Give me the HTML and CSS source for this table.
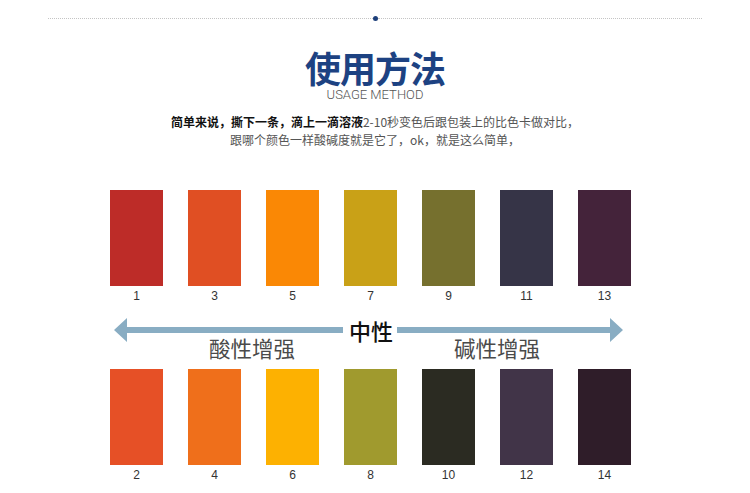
FILE: index.html
```html
<!DOCTYPE html>
<html lang="zh">
<head>
<meta charset="utf-8">
<title>使用方法</title>
<link rel="stylesheet" href="styles.css">
</head>
<body>
<div class="page">
  <div class="topline">
    <span class="seg"></span><span class="dot"></span><span class="seg"></span>
  </div>
  <h1 class="title">使用方法</h1>
  <div class="subtitle">USAGE METHOD</div>
  <p class="desc"><b>简单来说，撕下一条，滴上一滴溶液</b>2-10秒变色后跟包装上的比色卡做对比，<br>跟哪个颜色一样酸碱度就是它了，ok，就是这么简单，</p>

  <div class="chart">
    <div class="row">
      <div class="cell"><div class="sw c1"></div><span class="num">1</span></div>
      <div class="cell"><div class="sw c3"></div><span class="num">3</span></div>
      <div class="cell"><div class="sw c5"></div><span class="num">5</span></div>
      <div class="cell"><div class="sw c7"></div><span class="num">7</span></div>
      <div class="cell"><div class="sw c9"></div><span class="num">9</span></div>
      <div class="cell"><div class="sw c11"></div><span class="num">11</span></div>
      <div class="cell"><div class="sw c13"></div><span class="num">13</span></div>
    </div>

    <div class="scale">
      <svg class="arrow-l" width="229" height="24" viewBox="0 0 229 24"><polygon points="0,12 13,0 13,9 229,9 229,15 13,15 13,24" /></svg>
      <span class="neutral">中性</span>
      <svg class="arrow-r" width="226" height="24" viewBox="0 0 226 24"><polygon points="226,12 213,0 213,9 0,9 0,15 213,15 213,24" /></svg>
    </div>
    <div class="labels">
      <span class="lab">酸性增强</span>
      <span class="lab">碱性增强</span>
    </div>

    <div class="row row-b">
      <div class="cell"><div class="sw c2"></div><span class="num">2</span></div>
      <div class="cell"><div class="sw c4"></div><span class="num">4</span></div>
      <div class="cell"><div class="sw c6"></div><span class="num">6</span></div>
      <div class="cell"><div class="sw c8"></div><span class="num">8</span></div>
      <div class="cell"><div class="sw c10"></div><span class="num">10</span></div>
      <div class="cell"><div class="sw c12"></div><span class="num">12</span></div>
      <div class="cell"><div class="sw c14"></div><span class="num">14</span></div>
    </div>
  </div>
</div>
</body>
</html>
```

FILE: styles.css
```css
html, body {
  margin: 0;
  padding: 0;
  background: #ffffff;
}
body {
  font-family: "Noto Sans CJK SC", "Liberation Sans", sans-serif;
  color: #333;
}
.page {
  width: 750px;
  height: 493px;
  overflow: hidden;
}
.topline {
  width: 654px;
  margin: 16px auto 0;
  display: flex;
  align-items: center;
  height: 5px;
}
.seg {
  flex: 1;
  height: 0;
  border-top: 1px dotted #c4c4c4;
}
.dot {
  width: 5px;
  height: 5px;
  border-radius: 50%;
  background: #1d3f7a;
}
.title {
  margin: 27px 0 0;
  text-align: center;
  font-size: 36px;
  line-height: 38px;
  font-weight: 700;
  color: #1d4282;
  letter-spacing: -1px;
}
.subtitle {
  margin-top: 2px;
  text-align: center;
  font-family: Roboto, "Liberation Sans", sans-serif;
  font-weight: 300;
  font-size: 13px;
  line-height: 14px;
  color: #555;
}
.desc {
  margin: 11px 0 0;
  text-align: center;
  font-size: 12px;
  line-height: 18px;
  color: #555;
}
.desc b {
  color: #111;
  font-weight: 700;
}
.chart {
  margin: 41px 0 0 110px;
  width: 521px;
}
.row {
  display: grid;
  grid-template-columns: repeat(7, 53px);
  column-gap: 25px;
}
.cell {
  display: flex;
  flex-direction: column;
  align-items: center;
}
.sw {
  width: 53px;
  height: 96px;
}
.num {
  font-family: "Liberation Sans", Arial, sans-serif;
  font-size: 12px;
  line-height: 20px;
  color: #333;
}
.c1 { background: #bd2c28; }
.c3 { background: #e04f23; }
.c5 { background: #fa8805; }
.c7 { background: #c9a117; }
.c9 { background: #76702e; }
.c11 { background: #363447; }
.c13 { background: #44233a; }
.c2 { background: #e65026; }
.c4 { background: #ef6f1b; }
.c6 { background: #fdb101; }
.c8 { background: #a09a2e; }
.c10 { background: #2b2b22; }
.c12 { background: #413448; }
.c14 { background: #2f1d29; }

.scale {
  margin: 12px 0 0 4px;
  display: flex;
  align-items: center;
  height: 24px;
}
.scale svg {
  display: block;
  fill: #89adc3;
}
.neutral {
  width: 54px;
  text-align: center;
  font-size: 22px;
  line-height: 24px;
  font-weight: 500;
  color: #111;
  padding-left: 2px;
  box-sizing: border-box;
}
.labels {
  display: flex;
  margin: -5px 0 0 99px;
  column-gap: 159px;
}
.lab {
  font-size: 21.5px;
  line-height: 22px;
  color: #4a4a4a;
}
.row-b {
  margin-top: 10px;
}
```
